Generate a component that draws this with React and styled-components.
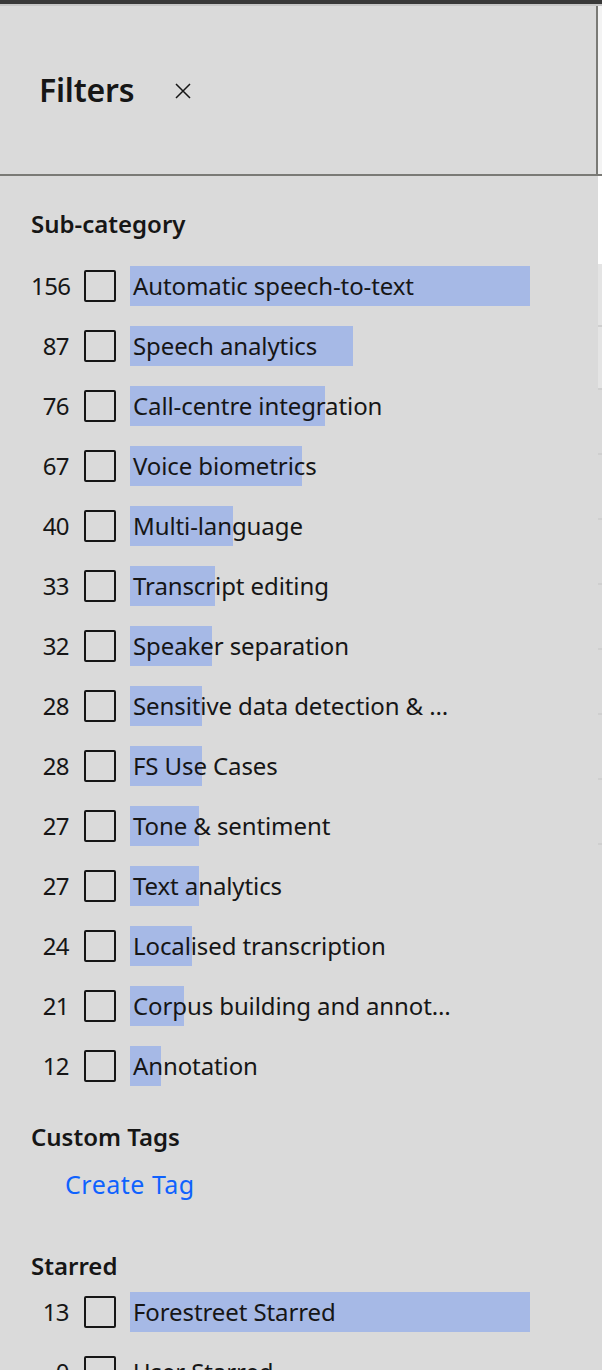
import React from "react";
import styled, { createGlobalStyle } from "styled-components";

const Global = createGlobalStyle`
  html, body { margin: 0; padding: 0; height: 100%; overflow: hidden; }
  body {
    background: #dadada;
    font-family: "Noto Sans", "Liberation Sans", Arial, sans-serif;
    color: #161616;
  }
`;

const Page = styled.div`
  width: 602px;
  height: 1370px;
  display: flex;
  flex-direction: column;
  background: #dadada;
  overflow: hidden;
`;

const TopBar = styled.div`
  height: 4px;
  background: #393939;
  border-bottom: 2px solid #c6c6c6;
  flex-shrink: 0;
`;

const Header = styled.header`
  display: flex;
  height: 168px;
  border-bottom: 2px solid #7a7a76;
  flex-shrink: 0;
`;

const HeaderMain = styled.div`
  box-sizing: border-box;
  width: 598px;
  border-right: 2px solid #7a7a76;
  display: flex;
  align-items: center;
  padding-left: 39px;
  gap: 41px;
`;

const HeaderEdge = styled.div`
  flex: 1;
  background: #f3f3f3;
`;

const Title = styled.h1`
  margin: 0;
  font-size: 32px;
  font-weight: 600;
  line-height: 40px;
  letter-spacing: -0.2px;
`;

const CloseButton = styled.button`
  border: 0;
  background: transparent;
  padding: 0;
  width: 16px;
  height: 16px;
  display: flex;
  color: #161616;
  cursor: pointer;
  margin-top: 2px;
`;

const Body = styled.div`
  display: flex;
  flex: 1;
`;

const Panel = styled.aside`
  box-sizing: border-box;
  width: 598px;
  padding: 32px 0 0 31px;
  display: flex;
  flex-direction: column;
`;

const Edge = styled.div`
  flex: 1;
  display: flex;
  flex-direction: column;
`;

const EdgeBlock = styled.div`
  height: ${(p) => p.$h}px;
  background: ${(p) => p.$bg};
  border-bottom: ${(p) => (p.$line ? "2px solid #cfcfcf" : "0")};
  box-sizing: border-box;
`;

const SectionTitle = styled.h2`
  margin: ${(p) => p.$top}px 0 0 0;
  font-size: 24px;
  font-weight: 600;
  line-height: 32px;
`;

const RowList = styled.div`
  display: flex;
  flex-direction: column;
  gap: 20px;
  margin-top: ${(p) => p.$top}px;
`;

const Row = styled.label`
  display: flex;
  align-items: center;
  height: 40px;
`;

const Count = styled.span`
  width: 38px;
  text-align: right;
  font-size: 24px;
  line-height: 40px;
  flex-shrink: 0;
  letter-spacing: -0.6px;
`;

const Box = styled.input`
  appearance: none;
  margin: 0 0 0 15px;
  box-sizing: border-box;
  width: 32px;
  height: 32px;
  border: 2px solid #161616;
  border-radius: 2px;
  background: transparent;
  flex-shrink: 0;
`;

const Label = styled.span`
  margin-left: 14px;
  width: 400px;
  height: 40px;
  background-image: linear-gradient(#a6b9e6, #a6b9e6);
  background-repeat: no-repeat;
  background-position: left top;
  flex-shrink: 0;
`;

const LabelText = styled.span`
  display: block;
  box-sizing: border-box;
  max-width: 326px;
  padding-left: 3px;
  font-size: 24px;
  line-height: 40px;
  letter-spacing: -0.1px;
  white-space: nowrap;
  overflow: hidden;
  text-overflow: ellipsis;
`;

const LinkButton = styled.button`
  align-self: flex-start;
  margin: 15px 0 0 34px;
  padding: 0;
  border: 0;
  background: transparent;
  font-family: inherit;
  font-size: 25px;
  letter-spacing: 0.5px;
  line-height: 32px;
  color: #0f62fe;
  cursor: pointer;
`;

const subCategories = [
  [156, "Automatic speech-to-text"],
  [87, "Speech analytics"],
  [76, "Call-centre integration"],
  [67, "Voice biometrics"],
  [40, "Multi-language"],
  [33, "Transcript editing"],
  [32, "Speaker separation"],
  [28, "Sensitive data detection & redaction"],
  [28, "FS Use Cases"],
  [27, "Tone & sentiment"],
  [27, "Text analytics"],
  [24, "Localised transcription"],
  [21, "Corpus building and annotation"],
  [12, "Annotation"],
];

const starred = [
  [13, "Forestreet Starred"],
  [0, "User Starred"],
];

function FilterRow({ count, label, max }) {
  const w = Math.round((count / max) * 400);
  return (
    <Row>
      <Count>{count}</Count>
      <Box type="checkbox" />
      <Label style={{ backgroundSize: `${w}px 100%` }}>
        <LabelText>{label}</LabelText>
      </Label>
    </Row>
  );
}

export default function App() {
  return (
    <Page>
      <Global />
      <TopBar />
      <Header>
        <HeaderMain>
          <Title>Filters</Title>
          <CloseButton aria-label="Close">
            <svg width="16" height="16" viewBox="0 0 16 16" fill="none">
              <path d="M1 1L15 15M15 1L1 15" stroke="#161616" strokeWidth="1.5" />
            </svg>
          </CloseButton>
        </HeaderMain>
        <HeaderEdge />
      </Header>
      <Body>
        <Panel>
          <SectionTitle $top={0}>Sub-category</SectionTitle>
          <RowList $top={26}>
            {subCategories.map(([c, l]) => (
              <FilterRow key={l} count={c} label={l} max={156} />
            ))}
          </RowList>
          <SectionTitle $top={35}>Custom Tags</SectionTitle>
          <LinkButton>Create Tag</LinkButton>
          <SectionTitle $top={50}>Starred</SectionTitle>
          <RowList $top={10}>
            {starred.map(([c, l]) => (
              <FilterRow key={l} count={c} label={l} max={13} />
            ))}
          </RowList>
        </Panel>
        <Edge>
          <EdgeBlock $h={88} $bg="#ffffff" />
          <EdgeBlock $h={63} $bg="#e4e4e4" $line />
          <EdgeBlock $h={63} $bg="#e4e4e4" $line />
          <EdgeBlock $h={65} $bg="#dadada" $line />
          <EdgeBlock $h={65} $bg="#dadada" $line />
          <EdgeBlock $h={65} $bg="#dadada" $line />
          <EdgeBlock $h={65} $bg="#dadada" $line />
          <EdgeBlock $h={65} $bg="#dadada" $line />
          <EdgeBlock $h={65} $bg="#dadada" $line />
          <EdgeBlock $h={65} $bg="#dadada" $line />
        </Edge>
      </Body>
    </Page>
  );
}
